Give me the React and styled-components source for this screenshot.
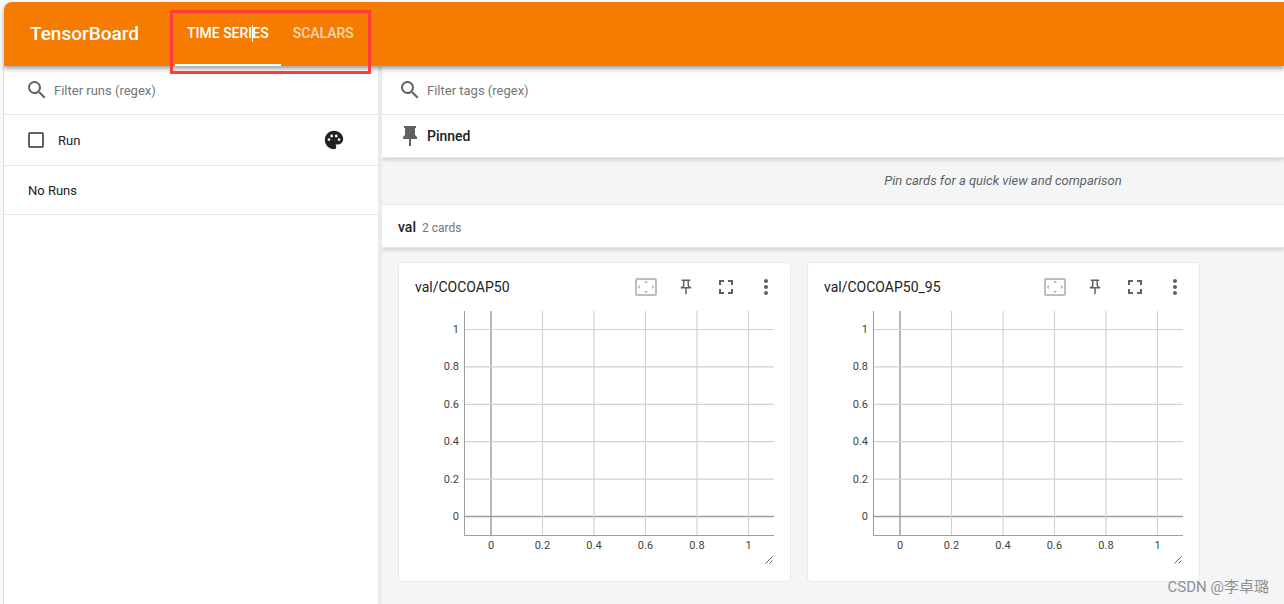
/**
*
* App
*
*/

import React from 'react';
import styled, { createGlobalStyle, css } from 'styled-components';
import {
  MdSearch,
  MdPalette,
  MdFullscreen,
  MdMoreVert,
  MdSettingsOverscan
} from 'react-icons/md';

const GlobalStyle = createGlobalStyle`
  * {
    box-sizing: border-box;
  }

  body {
    margin: 0;
    background: #f7f8f9;
    color: #212121;
    font-family: Roboto, 'Noto Sans CJK SC', sans-serif;
    font-size: 13px;
    line-height: 20px;
    overflow: hidden;
  }

  button, input {
    margin: 0;
    font: inherit;
  }
`;

const Page = styled.div`
  position: relative;
  display: flex;
  flex-direction: column;
  height: 100vh;
  padding: 2px 0 0 3px;
`;

const Header = styled.header`
  position: relative;
  z-index: 1;
  display: flex;
  align-items: center;
  flex: none;
  height: 64px;
  margin-left: 1px;
  padding-left: 26px;
  background: #f57c00;
  border-top-left-radius: 8px;
  box-shadow: 0 3px 4px rgba(0, 0, 0, 0.35);
`;

const Brand = styled.h1`
  width: 140px;
  margin: 0;
  color: #fff;
  font-size: 19px;
  font-weight: 500;
  line-height: 24px;
`;

// Red frame drawn around the two plugin tabs
const TabFrame = styled.nav`
  display: flex;
  align-self: flex-start;
  height: 64px;
  margin-top: 8px;
  padding: 0 2px;
  border: 3px solid #ff3b3b;
`;

const Tab = styled.button`
  position: relative;
  height: 53px;
  padding: 0 12px 12px;
  border: 0;
  border-bottom: 2px solid ${props => (props.$active ? '#fff' : 'transparent')};
  background: none;
  color: ${props => (props.$active ? '#fff' : 'rgba(255, 255, 255, 0.7)')};
  font-size: 14px;
  font-weight: 500;
  white-space: nowrap;
`;

const Caret = styled.span`
  position: absolute;
  top: 12px;
  right: 28px;
  width: 1px;
  height: 17px;
  background: #fff;
`;

const Body = styled.div`
  display: flex;
  flex: 1;
  min-height: 0;
`;

const Sidebar = styled.aside`
  flex: none;
  width: 379px;
  border-left: 1px solid #e0e0e0;
  border-right: 4px solid #ebebeb;
  background: #fff;
`;

const Main = styled.main`
  flex: 1;
  min-width: 0;
  background: #f4f5f7;
`;

const rule = css`
  border-bottom: 1px solid #e8e8e8;
`;

const FilterRow = styled.label`
  display: flex;
  align-items: center;
  height: 49px;
  padding-left: ${props => props.$indent}px;
  background: #fff;
  color: #616161;
  ${rule}

  svg {
    flex: none;
    width: 24px;
    height: 24px;
  }
`;

const FilterInput = styled.input`
  flex: 1;
  min-width: 0;
  padding: 2px 0 0 5px;
  border: 0;
  outline: 0;
  background: none;
  color: #212121;

  &::placeholder {
    color: #757575;
    opacity: 1;
  }
`;

const RunRow = styled.div`
  display: flex;
  align-items: center;
  height: ${props => (props.$header ? 51 : 49)}px;
  padding: 0 32px 0 24px;
  ${rule}
`;

const RunLabel = styled.label`
  display: flex;
  flex: 1;
  align-items: center;
  gap: 14px;
`;

const RunText = styled.span`
  padding-top: 2px;
`;

const Checkbox = styled.input`
  appearance: none;
  width: 16px;
  height: 16px;
  border: 2px solid #616161;
  border-radius: 2px;
`;

const IconButton = styled.button`
  display: flex;
  align-items: center;
  justify-content: center;
  width: ${props => props.$size || 40}px;
  height: ${props => props.$size || 40}px;
  padding: 0;
  border: 0;
  background: none;
  color: ${props => props.$color || '#616161'};

  svg {
    flex: none;
  }
`;

const GroupBar = styled.div`
  position: relative;
  display: flex;
  align-items: center;
  height: 43px;
  padding-left: 16px;
  border-bottom: 1px solid #e6e7e8;
  background: #fff;
  box-shadow: 0 2px 4px rgba(0, 0, 0, 0.15);
  clip-path: inset(0 0 -8px 0);

  svg {
    color: #616161;
  }
`;

const GroupTitle = styled.h2`
  margin: 0;
  font-size: 14px;
  font-weight: 500;
  line-height: 20px;
`;

const PinnedTitle = styled(GroupTitle)`
  padding-left: 5px;
`;

const GroupHeading = styled.div`
  display: flex;
  align-items: baseline;
  gap: 6px;
  padding-top: 2px;
`;

const CardCount = styled.span`
  color: #757575;
  font-size: 12px;
`;

const PinHint = styled.p`
  height: 47px;
  margin: 0;
  padding: 13px 0 0 340px;
  color: #616161;
  font-style: italic;
  text-align: center;
  ${rule}
`;

const CardGrid = styled.div`
  display: grid;
  grid-template-columns: repeat(auto-fill, 393px);
  gap: 16px;
  padding: 14px 16px;
`;

const Card = styled.section`
  height: 320px;
  border: 1px solid #e8e9eb;
  border-radius: 4px;
  background: #fff;
`;

const CardHeader = styled.div`
  display: flex;
  align-items: center;
  height: 48px;
  padding: 0 4px 0 16px;
`;

const CardTitle = styled.h3`
  flex: 1;
  margin: 0;
  font-size: 14px;
  font-weight: 400;
  line-height: 20px;
`;

const ChartSvg = styled.svg`
  display: block;
  width: 100%;
  height: 256px;
  font-size: 11px;
  fill: #424242;
`;

const Watermark = styled.div`
  position: absolute;
  right: 15px;
  bottom: 7px;
  color: #8f9092;
  font-size: 15px;
`;

const TICKS = [0, 0.2, 0.4, 0.6, 0.8, 1];

const xScale = v => 92 + v * 257.5;
const yScale = v => 205.5 - v * 187;

function PinIcon() {
  return (
    <svg width="24" height="24" viewBox="0 0 24 24" fill="currentColor" aria-hidden="true">
      <path d="M6 2h12v2h-1v7l2 2v2h-6v7h-2v-7H5v-2l2-2V4H6z" />
    </svg>
  );
}

function PinOutlineIcon() {
  return (
    <svg width="18" height="18" viewBox="0 0 24 24" fill="currentColor" aria-hidden="true">
      <path d="M14 4v5c0 1.120.370 2.160 1 3H9c.650-.860 1-1.900 1-3V4h4m3-2H7c-.550 0-1 .450-1 1s.450 1 1 1h1v5c0 1.660-1.340 3-3 3v2h5.970v7l1 1 1-1v-7H19v-2c-1.660 0-3-1.340-3-3V4h1c.550 0 1-.450 1-1s-.450-1-1-1z" />
    </svg>
  );
}

function Chart({ label }) {
  return (
    <ChartSvg role="img" aria-label={ label }>
      { TICKS.map(t => (
        <g key={ t }>
          <path
            d={ `M${xScale(t)} 0V224M66 ${yScale(t)}H375` }
            fill="none"
            stroke={ t === 0 ? '#9e9e9e' : '#d2d2d2' }
            strokeWidth={ t === 0 ? 1.5 : 1.2 }
          />
          <text x={ xScale(t) } y="238" textAnchor="middle">{ t }</text>
          <text x="60" y={ Math.floor(yScale(t) + 4) } textAnchor="end">{ t }</text>
        </g>
      )) }
      <path d="M65.5 0V224.500H375" fill="none" stroke="#9e9e9e" />
      <path d="M366.500 252.500l7-7M370.500 252.500l3-3" fill="none" stroke="#616161" />
    </ChartSvg>
  );
}

function ScalarCard({ tag }) {
  return (
    <Card>
      <CardHeader>
        <CardTitle>{ tag }</CardTitle>
        <IconButton $color="#bdbdbd" aria-label="Fit line domains to data"><MdSettingsOverscan size={ 24 } /></IconButton>
        <IconButton aria-label="Pin card"><PinOutlineIcon /></IconButton>
        <IconButton aria-label="Toggle full size mode"><MdFullscreen size={ 24 } /></IconButton>
        <IconButton aria-label="More options"><MdMoreVert size={ 24 } /></IconButton>
      </CardHeader>
      <Chart label={ tag } />
    </Card>
  );
}

class App extends React.Component {
  render() {
    return (
      <Page>
        <GlobalStyle />
        <Header>
          <Brand>TensorBoard</Brand>
          <TabFrame>
            <Tab $active>TIME SERIES<Caret /></Tab>
            <Tab>SCALARS</Tab>
          </TabFrame>
        </Header>
        <Body>
          <Sidebar>
            <FilterRow $indent={ 21 }>
              <MdSearch />
              <FilterInput type="text" placeholder="Filter runs (regex)" aria-label="Filter runs (regex)" />
            </FilterRow>
            <RunRow $header>
              <RunLabel>
                <Checkbox type="checkbox" />
                <RunText>Run</RunText>
              </RunLabel>
              <IconButton $size={ 24 } $color="#212121" aria-label="Color runs"><MdPalette size={ 22 } /></IconButton>
            </RunRow>
            <RunRow>
              <RunText>No Runs</RunText>
            </RunRow>
          </Sidebar>
          <Main>
            <FilterRow $indent={ 16 }>
              <MdSearch />
              <FilterInput type="text" placeholder="Filter tags (regex)" aria-label="Filter tags (regex)" />
            </FilterRow>
            <GroupBar>
              <PinIcon />
              <PinnedTitle>Pinned</PinnedTitle>
            </GroupBar>
            <PinHint>Pin cards for a quick view and comparison</PinHint>
            <GroupBar>
              <GroupHeading>
                <GroupTitle>val</GroupTitle>
                <CardCount>2 cards</CardCount>
              </GroupHeading>
            </GroupBar>
            <CardGrid>
              <ScalarCard tag="val/COCOAP50" />
              <ScalarCard tag="val/COCOAP50_95" />
            </CardGrid>
          </Main>
        </Body>
        <Watermark>CSDN @李卓璐</Watermark>
      </Page>
    );
  }
}

export default App;
